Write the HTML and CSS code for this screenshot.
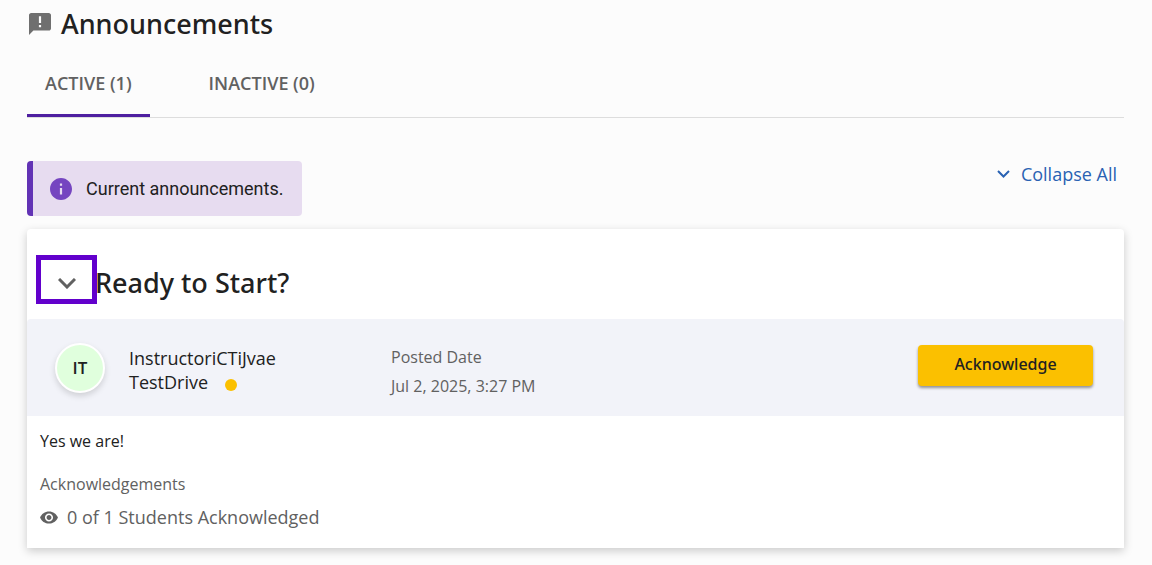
FILE: index.html
```html
<!DOCTYPE html>
<html lang="en">
<head>
    <meta charset="UTF-8">
    <meta name="viewport" content="width=device-width, initial-scale=1.0">
    <title>Announcements</title>
    <link rel="stylesheet" href="styles.css">
</head>
<body>

    <header class="page-header">
        <svg class="header-icon" viewBox="2 2 20 20" aria-hidden="true">
            <path d="M20 2H4c-1.100 0-2 .9-2 2v18l4-4h14c1.100 0 2-.9 2-2V4c0-1.100-.9-2-2-2zm-7 13h-2v-2h2v2zm0-4h-2V5h2v6z"/>
        </svg>
        <h1>Announcements</h1>
    </header>

    <main>
        <div class="tabs" role="tablist">
            <button class="tab active" type="button" role="tab" aria-selected="true">ACTIVE (1)</button>
            <button class="tab" type="button" role="tab" aria-selected="false">INACTIVE (0)</button>
        </div>

        <div class="toolbar">
            <div class="info">
                <svg class="info-icon" viewBox="2 2 20 20" aria-hidden="true">
                    <path d="M12 2C6.480 2 2 6.480 2 12s4.480 10 10 10 10-4.480 10-10S17.520 2 12 2zm1 15h-2v-6h2v6zm0-8h-2V7h2v2z"/>
                </svg>
                <span>Current announcements.</span>
            </div>
            <button class="collapse-all" type="button">
                <svg class="collapse-icon" viewBox="0 0 13 8" aria-hidden="true">
                    <path d="M1 1l5.500 5.500L12 1"/>
                </svg>
                Collapse All
            </button>
        </div>

        <article class="card">
            <div class="card-title">
                <button class="toggle" type="button" aria-label="Collapse announcement" aria-expanded="true">
                    <svg class="toggle-icon" viewBox="0 0 18 11" aria-hidden="true">
                        <path d="M1 1l8 8 8-8"/>
                    </svg>
                </button>
                <h2>Ready to Start?</h2>
            </div>

            <div class="card-meta">
                <div class="avatar">IT</div>
                <div class="author">InstructoriCTiJvae TestDrive <span class="dot"></span></div>
                <div class="posted">
                    <div>Posted Date</div>
                    <div>Jul 2, 2025, 3:27 PM</div>
                </div>
                <button class="acknowledge" type="button">Acknowledge</button>
            </div>

            <div class="card-body">
                <p class="message">Yes we are!</p>
                <p class="label">Acknowledgements</p>
                <p class="count">
                    <svg class="eye-icon" viewBox="1 4 22 16" aria-hidden="true">
                        <path d="M12 4.500C7 4.500 2.730 7.610 1 12c1.730 4.390 6 7.500 11 7.500s9.270-3.110 11-7.500c-1.730-4.390-6-7.500-11-7.500zM12 17c-2.760 0-5-2.240-5-5s2.240-5 5-5 5 2.240 5 5-2.240 5-5 5zm0-8c-1.660 0-3 1.340-3 3s1.340 3 3 3 3-1.340 3-3-1.340-3-3-3z"/>
                    </svg>
                    0 of 1 Students Acknowledged
                </p>
            </div>
        </article>
    </main>

</body>
</html>
```
FILE: styles.css
```css
* {
    box-sizing: border-box;
}

body {
    font-family: "Open Sans", sans-serif;
    margin: 0;
    padding: 4px 28px 16px 27px;
    background-color: #fcfcfc;
    color: #212121;
}

button {
    font-family: inherit;
    border: none;
    background: none;
    padding: 0;
    cursor: pointer;
}

h1, h2, p {
    margin: 0;
}

h1, h2 {
    font-family: "Noto Sans", "Open Sans", sans-serif;
    font-size: 27px;
    line-height: 40px;
    font-weight: 500;
}

.page-header {
    display: flex;
    align-items: center;
    gap: 10px;
    padding-left: 2px;
}

.header-icon {
    width: 22px;
    height: 22px;
    fill: #6f6f6f;
}

.tabs {
    display: flex;
    margin-top: 4px;
    border-bottom: 1px solid #dddddd;
}

.tab {
    height: 69px;
    padding: 3px 18px 0;
    border-bottom: 3px solid transparent;
    color: #616161;
    font-size: 18px;
    font-weight: 600;
}

.tab + .tab {
    margin-left: 41px;
}

.tab.active {
    border-bottom-color: #4e1fa0;
}

.toolbar {
    display: flex;
    justify-content: space-between;
    align-items: flex-start;
    margin-top: 43px;
}

.info {
    display: flex;
    align-items: center;
    gap: 14px;
    height: 55px;
    padding: 0 19px 0 17px;
    border-left: 6px solid #6233b5;
    border-radius: 4px;
    background-color: #e7dcf0;
    font-family: Roboto, sans-serif;
    font-size: 18px;
}

.info-icon {
    width: 22px;
    height: 22px;
    fill: #7545c0;
}

.collapse-all {
    display: flex;
    align-items: center;
    gap: 11px;
    padding: 0 7px 0 0;
    color: #2962b3;
    font-size: 18px;
    line-height: 26px;
}

.collapse-icon,
.toggle-icon {
    width: 13px;
    fill: none;
    stroke: #2962b3;
    stroke-width: 2;
}

.card {
    margin-top: 13px;
    border-radius: 4px 4px 0 0;
    background-color: #ffffff;
    box-shadow: 0 3px 10px rgba(0, 0, 0, 0.2);
}

.card-title {
    display: flex;
    align-items: flex-start;
    height: 90px;
    padding: 26px 9px 0;
}

.card-title h2 {
    margin-left: -2px;
    padding-top: 8px;
}

.toggle {
    width: 61px;
    height: 49px;
    padding-top: 8px;
    border: 5px solid #6200cc;
}

.toggle-icon {
    width: 18px;
    stroke: #616161;
    stroke-width: 3;
}

.card-meta {
    display: flex;
    align-items: center;
    min-height: 97px;
    padding: 0 31px 0 28px;
    border-radius: 4px 4px 0 0;
    background-color: #f2f3f9;
}

.avatar {
    width: 50px;
    height: 50px;
    border: 2px solid #ffffff;
    border-radius: 50%;
    background-color: #e0ffdd;
    box-shadow: 0 3px 6px rgba(0, 0, 0, 0.15);
    font-size: 17px;
    font-weight: 600;
    line-height: 46px;
    text-align: center;
}

.author {
    width: 240px;
    margin-left: 24px;
    padding: 4px 60px 0 0;
    font-size: 18px;
    line-height: 24px;
}

.dot {
    display: inline-block;
    width: 12px;
    height: 12px;
    margin-left: 12px;
    border-radius: 50%;
    background-color: #fbc000;
    vertical-align: -2px;
}

.posted {
    margin-left: 22px;
    padding-top: 8px;
    color: #616161;
    font-size: 16px;
    line-height: 29px;
}

.acknowledge {
    width: 175px;
    height: 41px;
    margin: 0 0 5px auto;
    padding-bottom: 2px;
    border-radius: 4px;
    background-color: #fbc000;
    box-shadow: 0 2px 3px rgba(0, 0, 0, 0.4);
    color: #212121;
    font-family: "Noto Sans", "Open Sans", sans-serif;
    font-size: 16px;
    font-weight: 500;
}

.card-body {
    padding: 13px 13px 17px;
    color: #616161;
    font-size: 16px;
    line-height: 24px;
}

.message {
    color: #212121;
}

.label {
    margin-top: 19px;
}

.count {
    display: flex;
    align-items: center;
    gap: 9px;
    margin-top: 7px;
    font-size: 18px;
    line-height: 28px;
}

.eye-icon {
    width: 18px;
    height: 13px;
    fill: #616161;
}
```
